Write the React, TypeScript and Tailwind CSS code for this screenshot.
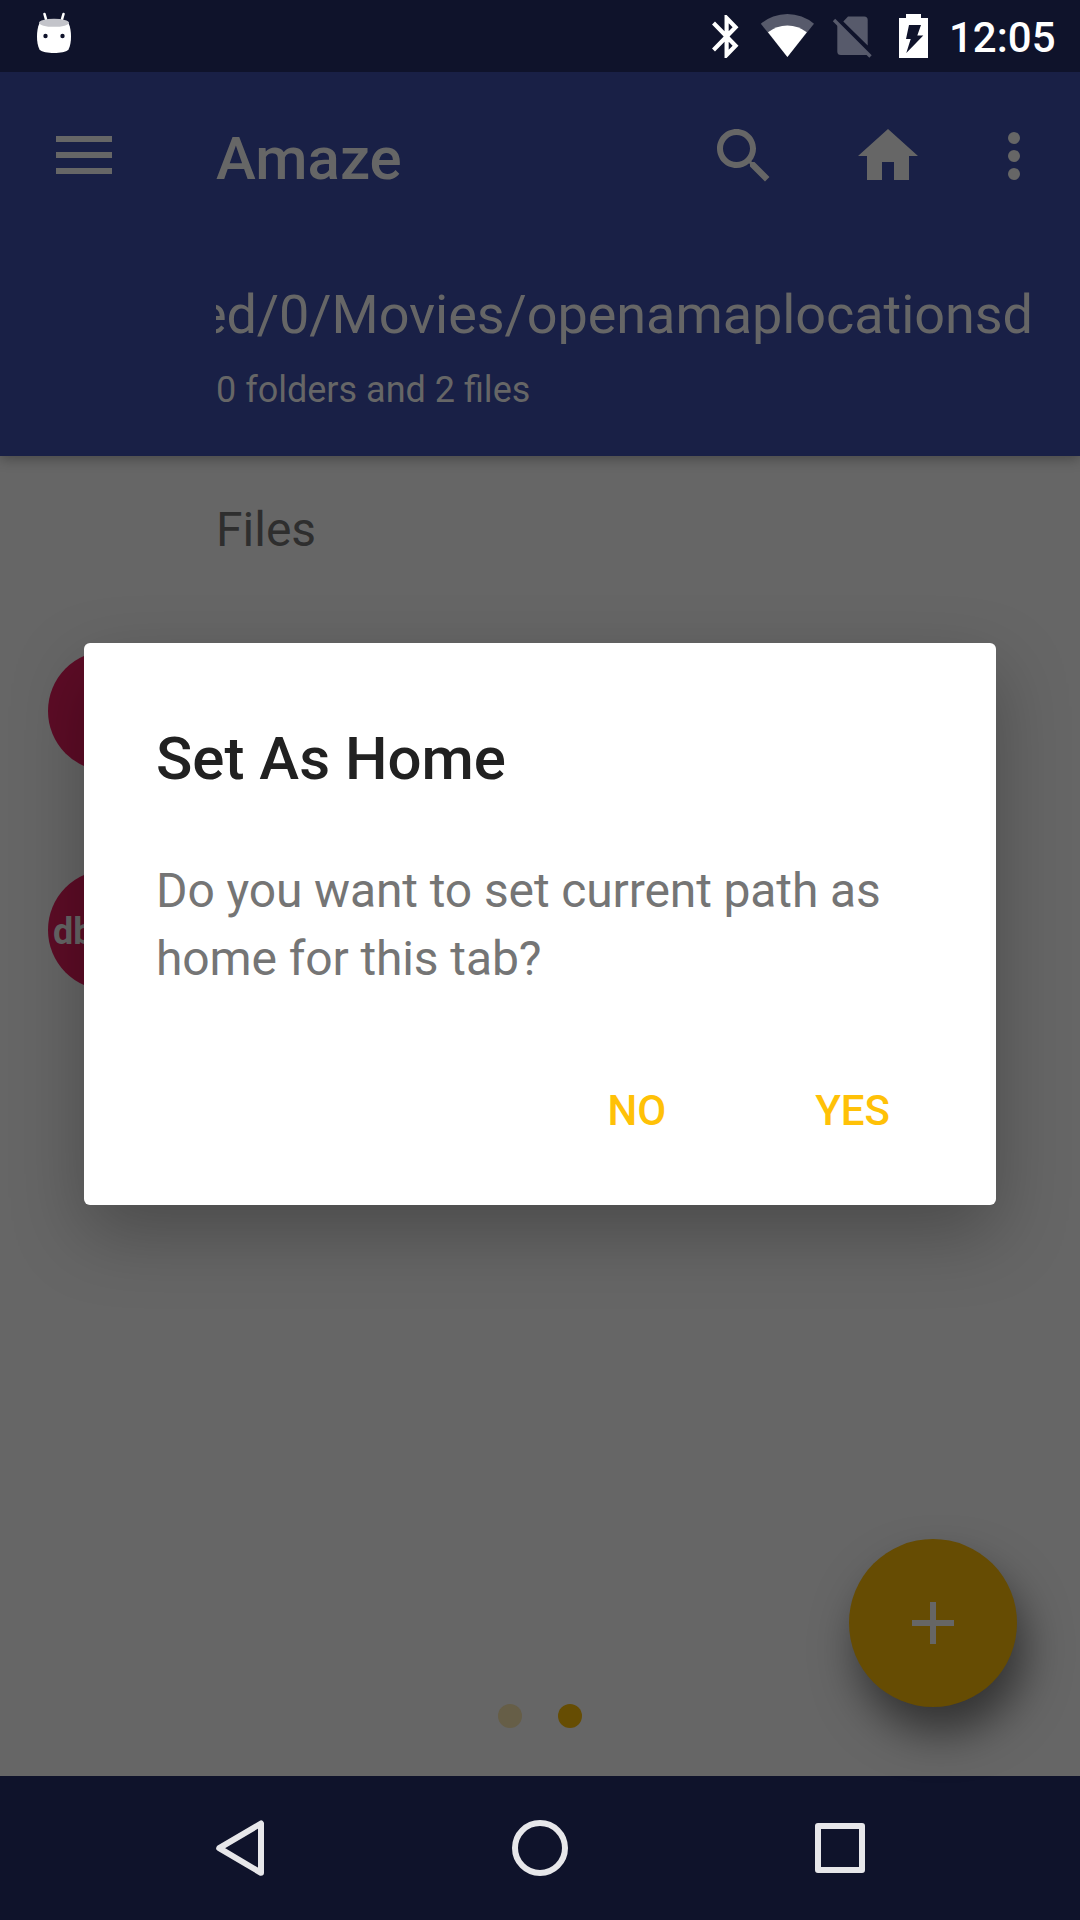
import React from "react";

function StatusBar() {
  return (
    <header className="relative z-20 flex h-[72px] items-center bg-[#0f132b] pl-[36px] pr-[24px] text-white">
      <svg className="h-[72px] w-[36px]" viewBox="0 0 36 72" fill="none">
        <path d="M8.500 14L10.500 21M27.500 14L25.500 21" stroke="#fff" strokeWidth="2.600" strokeLinecap="round" />
        <path d="M3.500 23C1.500 27 1 32 1 37s.8 9 2.500 12.500C6 52.200 12 53 18 53s12-.8 14.500-3.500C34.200 46 35 42 35 37s-.5-10-2.500-14z" fill="#fff" />
        <ellipse cx="18" cy="22.800" rx="15" ry="4" fill="#c3c4ca" />
        <circle cx="9.500" cy="36" r="2.200" fill="#0f132b" />
        <circle cx="26.500" cy="36" r="2.200" fill="#0f132b" />
      </svg>
      <svg className="ml-auto h-[72px] w-[236px]" viewBox="0 0 236 72" fill="none">
        <path
          transform="translate(-4.350 10.700) scale(2.080 2.150)"
          d="M17.710 7.710L12 2h-1v7.590L6.410 5 5 6.410 10.590 12 5 17.590 6.410 19 11 14.410V22h1l5.710-5.710-4.300-4.290 4.300-4.290zM13 5.830l1.880 1.880L13 9.590V5.830zm1.880 10.460L13 18.170v-3.760l1.880 1.880z"
          fill="#fff"
        />
        <path d="M81.400 57L54.800 23.700A41.300 41.300 0 0 1 108 23.700z" fill="#575a6b" />
        <path d="M81.400 57L62 32.300A30.900 30.900 0 0 1 100.800 32.300z" fill="#fff" />
        <path d="M137.300 21.500L142 16.600H158.200Q161.700 16.600 161.700 20.100V45.600zM131.300 23.300L162 55H134.800Q131.300 55 131.300 51.500z" fill="#575a6b" />
        <path d="M128 20L164.500 56.500" stroke="#575a6b" strokeWidth="3.400" />
        <path d="M200 14H215V18H222V58H193V18H200z" fill="#fff" />
        <path d="M203 25H215L211.300 35.500H217.300L200.300 53L204.700 39H200z" fill="#0f132b" />
      </svg>
      <time className="ml-[7px] w-[107px] whitespace-nowrap pt-[3px] text-[42px] font-medium leading-[72px]">12:05</time>
    </header>
  );
}

function AppBar() {
  return (
    <section className="relative h-[384px] bg-[#192046] pr-[47px] text-[#666] shadow-[0_3px_12px_rgba(0,0,0,0.3)]">
      <div className="flex h-[168px] items-center">
        <svg className="ml-[48px] h-[72px] w-[72px]" viewBox="0 0 72 72" fill="currentColor">
          <path d="M8 16h56v6H8zM8 32h56v6H8zM8 48h56v6H8z" />
        </svg>
        <h1 className="ml-[96px] flex-1 pt-[5px] text-[60px] font-medium leading-[72px]">Amaze</h1>
        <svg className="h-[72px] w-[72px]" viewBox="0 0 24 24" fill="currentColor">
          <path d="M15.500 14h-.79l-.28-.27C15.410 12.590 16 11.110 16 9.500 16 5.910 13.090 3 9.500 3S3 5.910 3 9.500 5.910 16 9.500 16c1.610 0 3.090-.59 4.230-1.570l.27.28v.79l5 4.990L20.490 19l-4.990-5zm-6 0C7.010 14 5 11.990 5 9.500S7.010 5 9.500 5 14 7.010 14 9.500 11.990 14 9.500 14z" />
        </svg>
        <svg className="ml-[72px] h-[72px] w-[72px]" viewBox="0 0 24 24" fill="currentColor">
          <path d="M10 20v-6h4v6h5v-8h3L12 3 2 12h3v8z" />
        </svg>
        <svg className="-mr-[17px] ml-[54px] h-[72px] w-[72px]" viewBox="0 0 24 24" fill="currentColor">
          <circle cx="12" cy="6" r="2" />
          <circle cx="12" cy="12" r="2" />
          <circle cx="12" cy="18" r="2" />
        </svg>
      </div>
      <div className="ml-[216px] mt-[43px] flex h-[64px] w-[817px] justify-end overflow-hidden whitespace-nowrap text-[54px] leading-[64px] tracking-[-0.06px]">
        <span>ed/0/Movies/openamaplocationsd</span>
      </div>
      <p className="ml-[216px] mt-[21px] text-[36px] leading-[44px]">0 folders and 2 files</p>
    </section>
  );
}

function FileList() {
  return (
    <main className="relative h-[1320px] bg-[#666]">
      <h2 className="pl-[216px] pt-[46px] text-[48px] leading-[56px] text-[#2e2e2e]">Files</h2>
      <ul className="ml-[48px] mt-[93px] flex flex-col gap-[99px]">
        <li className="h-[120px] w-[120px] rounded-full bg-[#5d0c26]" />
        <li className="flex h-[120px] w-[120px] items-center rounded-full bg-[#5d0c26] pl-[5px] pt-[4px] text-[36px] font-bold text-[#666]">db</li>
      </ul>
      <div className="absolute bottom-[48px] left-[498px] flex gap-[36px]">
        <span className="h-[24px] w-[24px] rounded-full bg-[#665e47]" />
        <span className="h-[24px] w-[24px] rounded-full bg-[#664d03]" />
      </div>
      <button className="absolute bottom-[69px] right-[63px] flex h-[168px] w-[168px] items-center justify-center rounded-full bg-[#664c03] text-[#666] shadow-[8px_26px_44px_rgba(0,0,0,0.5)]">
        <svg className="h-[72px] w-[72px]" viewBox="0 0 24 24" fill="currentColor">
          <path d="M19 13h-6v6h-2v-6H5v-2h6V5h2v6h6v2z" />
        </svg>
      </button>
    </main>
  );
}

function NavigationBar() {
  return (
    <nav className="flex h-[144px] items-center justify-center gap-[204px] bg-[#0f132b]">
      <svg className="h-[96px] w-[96px]" viewBox="0 0 96 96" fill="none" stroke="#e7e7ea" strokeWidth="6" strokeLinejoin="round">
        <path d="M27.200 48.200L69 23.500V72.800z" />
      </svg>
      <svg className="h-[96px] w-[96px]" viewBox="0 0 96 96" fill="none" stroke="#e7e7ea" strokeWidth="6">
        <circle cx="48" cy="48" r="25" />
      </svg>
      <svg className="h-[96px] w-[96px]" viewBox="0 0 96 96" fill="none" stroke="#e7e7ea" strokeWidth="6" strokeLinejoin="round">
        <rect x="26" y="26" width="44" height="44" />
      </svg>
    </nav>
  );
}

function Dialog() {
  return (
    <div
      role="dialog"
      className="absolute left-[84px] top-[643px] h-[562px] w-[912px] rounded-[6px] bg-white px-[72px] pt-[80px] shadow-[0_28px_72px_rgba(0,0,0,0.27)]"
    >
      <h2 className="text-[60px] font-medium leading-[72px] text-[#212121]">Set As Home</h2>
      <p className="mt-[62px] whitespace-nowrap text-[48px] leading-[68px] tracking-[-0.12px] text-[#757575]">
        Do you want to set current path as
        <br />
        home for this tab?
      </p>
      <div className="mt-[93px] flex justify-end pr-[34px] text-[42px] font-medium leading-[50px] text-[#ffc107]">
        <button className="mr-[149px]">NO</button>
        <button>YES</button>
      </div>
    </div>
  );
}

export default function App() {
  return (
    <div className="relative flex h-[1920px] w-[1080px] flex-col overflow-hidden font-['Roboto',sans-serif]">
      <StatusBar />
      <div className="relative z-10">
        <AppBar />
      </div>
      <FileList />
      <NavigationBar />
      <div className="absolute inset-0 z-20">
        <Dialog />
      </div>
    </div>
  );
}
